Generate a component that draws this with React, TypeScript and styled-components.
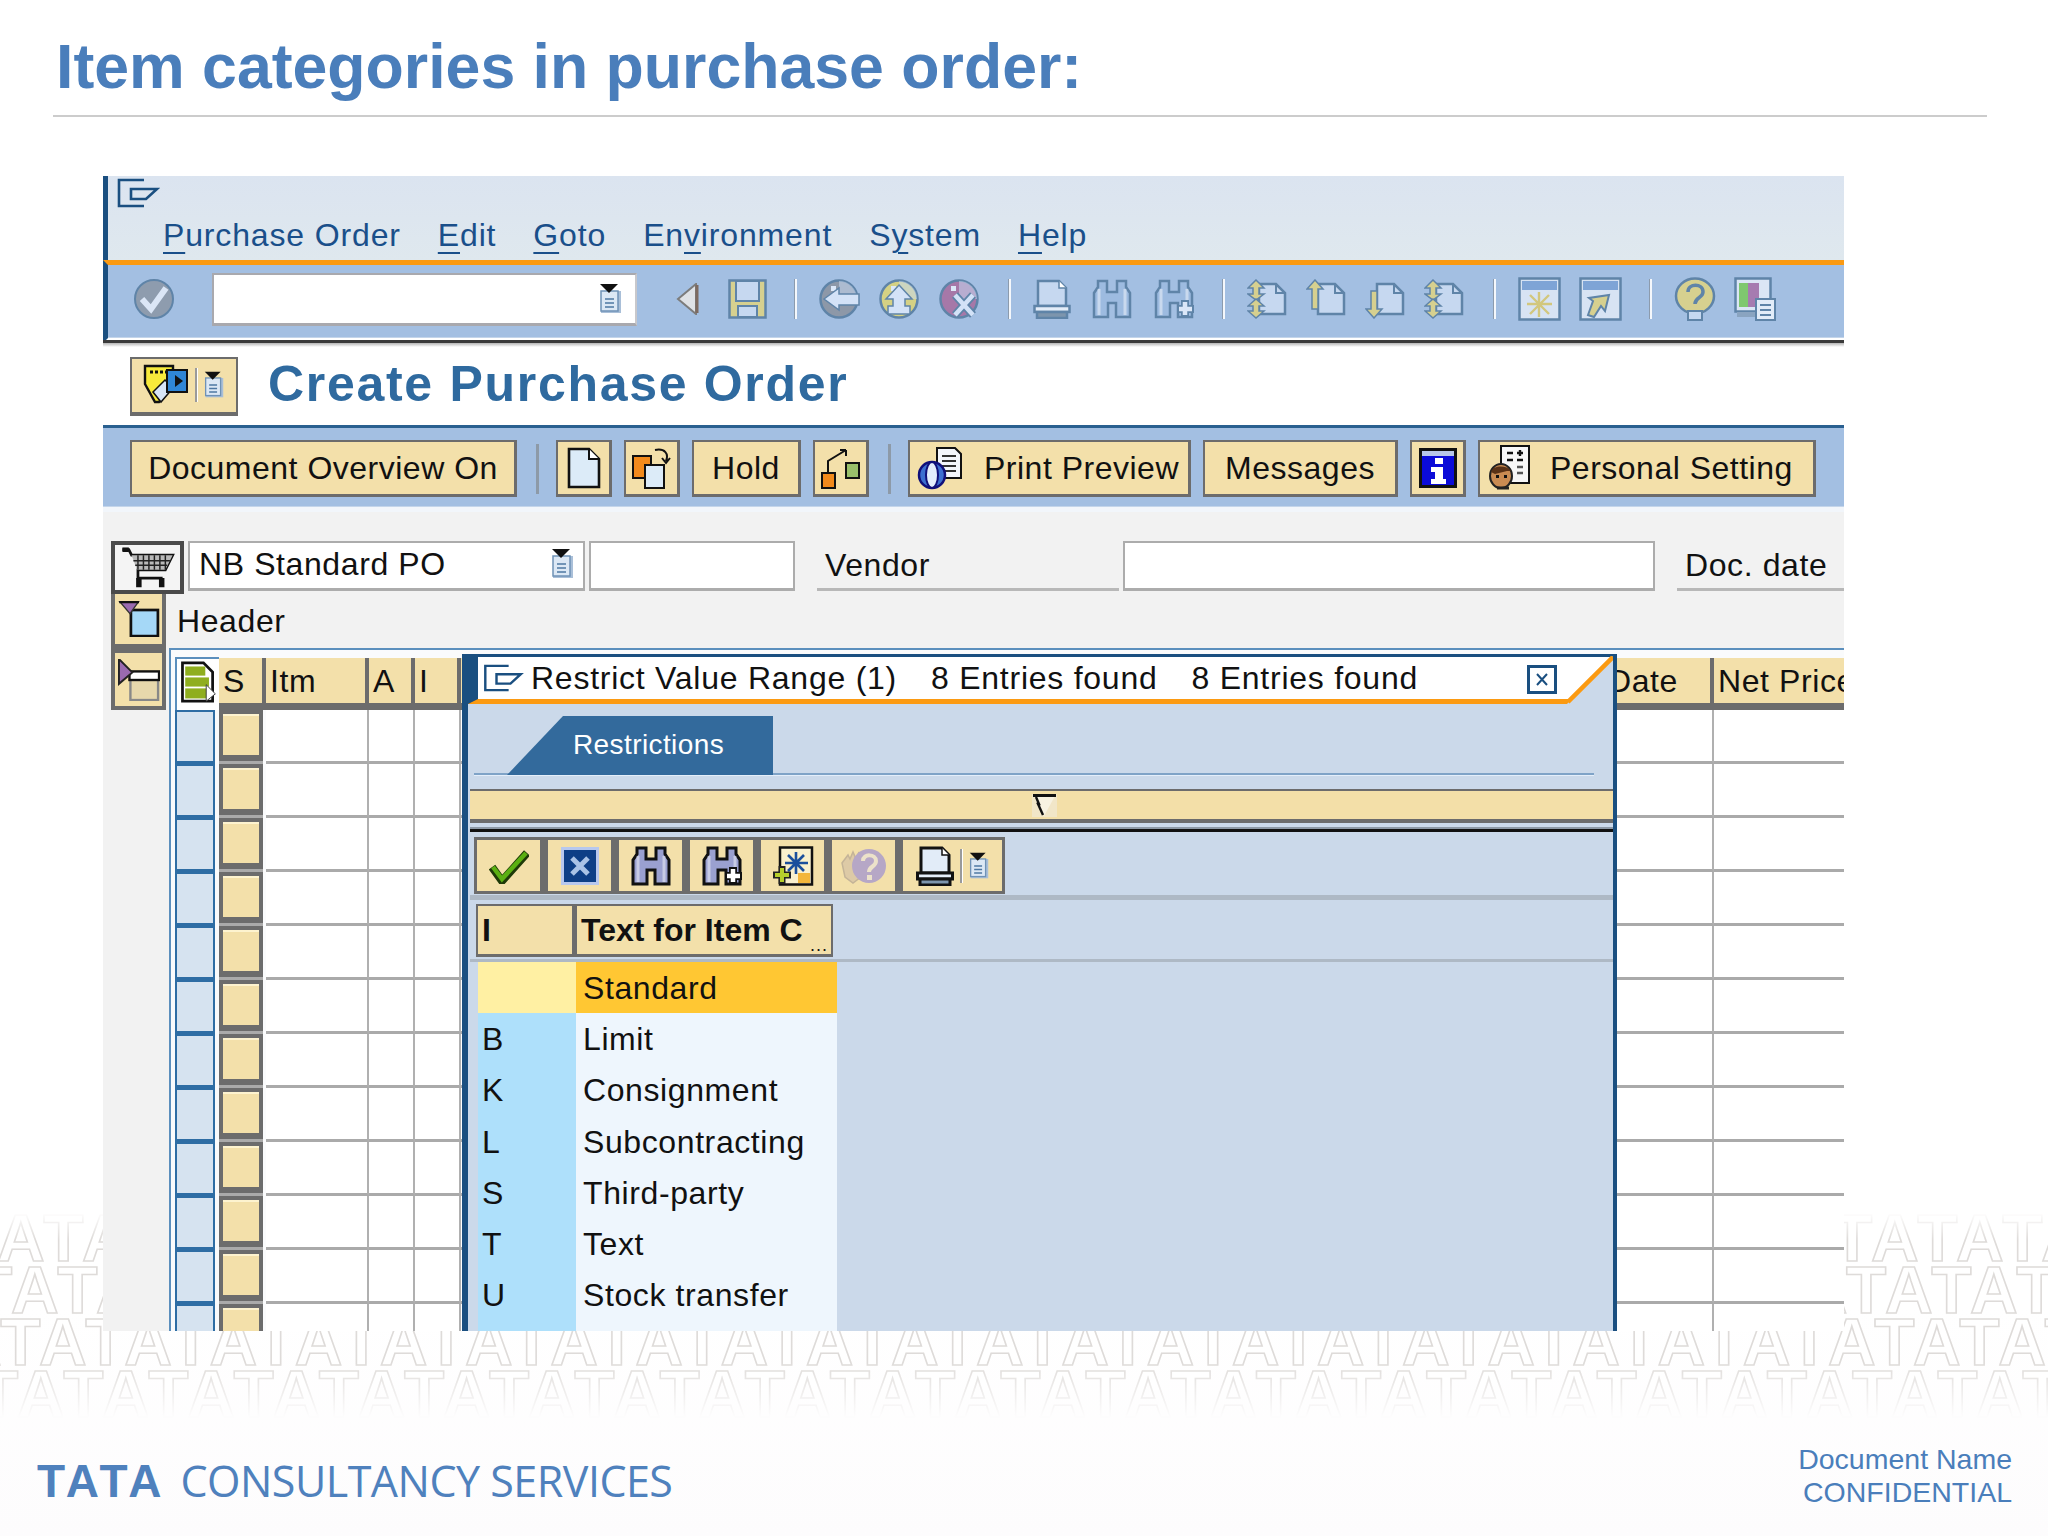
import React from 'react';
import styled, { createGlobalStyle } from 'styled-components';

const NAVY = '#1a4f80';
const BEIGE = '#f3e0aa';
const EDGE = '#6c6c6c';
const BAR = '#a3bfe2';
const POPUP = '#cbd9ea';
const OFF_LINE = '#5f84a8';
const OFF_FILL = '#c6d8f0';
const OFF_YELLOW = '#d6d08f';

const GlobalStyle = createGlobalStyle`
  html, body {
    margin: 0;
    padding: 0;
    background: #fff;
  }
  * {
    box-sizing: border-box;
  }
`;

/* ---------- icons ---------- */

const WindowGlyph = ({ w = 43, h = 30 }: { w?: number; h?: number }) => (
  <svg width={w} height={h} viewBox="0 0 43 30" fill="none" stroke={NAVY} strokeWidth="2.6">
    <path d="M27 2H2V28H27" />
    <path d="M14 11H40L29 21H14Z" />
  </svg>
);

const Clipboard = ({ w = 25, h = 30 }: { w?: number; h?: number }) => (
  <svg width={w} height={h} viewBox="0 0 25 30">
    <rect x="3" y="7" width="20" height="22" fill="#a9bfd8" />
    <rect x="3" y="7" width="17" height="20" fill="#dce8f5" stroke="#6f92b6" strokeWidth="1.5" />
    <polygon points="2,0 20,0 11,9" fill="#111" />
    <path d="M7 15H16M7 19H16M7 23H16" stroke="#4e78a3" strokeWidth="1.6" />
  </svg>
);

const CheckOff = () => (
  <svg width="42" height="40" viewBox="0 0 42 40">
    <circle cx="21" cy="20" r="19" fill="#8e9cae" stroke={OFF_LINE} strokeWidth="2" />
    <path d="M9 20L18 30L33 9" fill="none" stroke="#dbe6f6" strokeWidth="6" />
  </svg>
);

const BackTriangle = () => (
  <svg width="23" height="32" viewBox="0 0 23 32">
    <polygon points="20,1 20,31 2,16" fill="#dfe2e6" stroke="#7c7c7c" strokeWidth="2" />
    <path d="M21 2V30" stroke="#7d6a60" strokeWidth="3" />
  </svg>
);

const SaveOff = () => (
  <svg width="39" height="40" viewBox="0 0 39 40">
    <rect x="1.5" y="1.5" width="36" height="37" fill={OFF_YELLOW} stroke={OFF_LINE} strokeWidth="2.5" />
    <rect x="8" y="2" width="23" height="20" fill={OFF_FILL} stroke={OFF_LINE} strokeWidth="2" />
    <rect x="10" y="27" width="19" height="11" fill={OFF_FILL} stroke={OFF_LINE} strokeWidth="2" />
  </svg>
);

const RoundOff = ({ tint, children }: { tint: string; children: React.ReactNode }) => (
  <svg width="42" height="40" viewBox="0 0 42 40">
    <circle cx="20" cy="20" r="18.5" fill={tint} stroke={OFF_LINE} strokeWidth="2.5" />
    <path d="M20 2A18 18 0 0 1 38 20L20 20Z" fill={OFF_FILL} opacity="0.55" />
    <rect x="12" y="7" width="5" height="5" fill="#dce8f8" />
    {children}
  </svg>
);

const BackOff = () => (
  <RoundOff tint="#8d98a8">
    <polygon points="5,20 20,9 20,15 40,15 40,26 20,26 20,31" fill="#d3e2f7" stroke={OFF_LINE} strokeWidth="1.5" />
  </RoundOff>
);

const UpOff = () => (
  <RoundOff tint="#d5d184">
    <polygon points="20,6 33,20 26,20 26,27 31,27 31,35 9,35 9,27 14,27 14,20 7,20" fill="#d3e2f7" stroke={OFF_LINE} strokeWidth="1.5" />
  </RoundOff>
);

const CancelOff = () => (
  <RoundOff tint="#a678a8">
    <path d="M16 16L34 36M34 16L16 36" stroke={OFF_LINE} strokeWidth="8" />
    <path d="M16 16L34 36M34 16L16 36" stroke="#d3e2f7" strokeWidth="4.5" />
  </RoundOff>
);

const Printer = ({ line, fill, weight = 2.5 }: { line: string; fill: string; weight?: number }) => (
  <svg width="38" height="40" viewBox="0 0 38 40">
    <path d="M5 2H26L33 9V27H5Z" fill={fill} stroke={line} strokeWidth={weight} />
    <path d="M26 2V9H33" fill="#fff" stroke={line} strokeWidth="1.5" />
    <rect x="1.5" y="27" width="35" height="6" fill="#e4edf8" stroke={line} strokeWidth={weight} />
    <rect x="4" y="33" width="30" height="6" fill="#7d95ad" stroke={line} strokeWidth={weight} />
  </svg>
);

const Binoculars = ({ line, fill, weight = 2.5, plus }: { line: string; fill: string; weight?: number; plus?: boolean }) => (
  <svg width="42" height="40" viewBox="0 0 42 40">
    <polygon
      points="7,2 16,2 16,13 26,13 26,2 35,2 35,8 39,14 39,38 25,38 25,24 17,24 17,38 3,38 3,14 7,8"
      fill={fill}
      stroke={line}
      strokeWidth={weight}
    />
    <path d="M8 10V36M34 10V36" stroke="#ffffff" strokeOpacity="0.45" strokeWidth="3" />
    {plus && <path d="M32 21V38M24 30H41" stroke={line} strokeWidth="8" />}
    {plus && <path d="M32 23V36M26 30H39" stroke={line === '#111' ? '#fff' : '#dbe7f8'} strokeWidth="4.5" />}
  </svg>
);

const PageArrows = ({ up, down, twin }: { up?: boolean; down?: boolean; twin?: boolean }) => (
  <svg width="42" height="40" viewBox="0 0 42 40">
    <path d="M12 5H29L38 14V35H12Z" fill={OFF_FILL} stroke={OFF_LINE} strokeWidth="2.5" />
    <path d="M29 5V14H38" fill="none" stroke={OFF_LINE} strokeWidth="2" />
    {up && <polygon points="9,1 17,10 12,10 12,30 6,30 6,10 1,10" fill={OFF_YELLOW} stroke={OFF_LINE} strokeWidth="1.5" />}
    {down && <polygon points="9,39 17,30 12,30 12,12 6,12 6,30 1,30" fill={OFF_YELLOW} stroke={OFF_LINE} strokeWidth="1.5" />}
    {twin && (
      <>
        <polygon points="9,1 17,9 12,9 12,15 17,15 9,21 1,15 6,15 6,9 1,9" fill={OFF_YELLOW} stroke={OFF_LINE} strokeWidth="1.5" />
        <polygon points="9,20 17,27 12,27 12,32 17,32 9,39 1,32 6,32 6,27 1,27" fill={OFF_YELLOW} stroke={OFF_LINE} strokeWidth="1.5" />
      </>
    )}
  </svg>
);

const WindowOff = ({ arrow }: { arrow?: boolean }) => (
  <svg width="43" height="44" viewBox="0 0 43 44">
    <rect x="1.5" y="1.5" width="40" height="41" fill="#d7e3f3" stroke={OFF_LINE} strokeWidth="2.5" />
    <rect x="4" y="4" width="35" height="9" fill="#7ea4d6" />
    {arrow ? (
      <polygon points="9,38 14,24 10,21 30,18 26,34 22,29 15,40" fill={OFF_YELLOW} stroke={OFF_LINE} strokeWidth="2" />
    ) : (
      <path d="M21 15V40M9 27H34M12 18L31 37M31 18L12 37" stroke="#d2c77d" strokeWidth="2.4" />
    )}
  </svg>
);

const HelpOff = () => (
  <svg width="42" height="44" viewBox="0 0 42 44">
    <ellipse cx="21" cy="19" rx="19" ry="17.5" fill={OFF_YELLOW} stroke={OFF_LINE} strokeWidth="2.5" />
    <path d="M14 15C14 6 29 6 29 15C29 21 21 20 21 27" fill="none" stroke={OFF_LINE} strokeWidth="3.5" />
    <rect x="14" y="34" width="14" height="9" fill={OFF_FILL} stroke={OFF_LINE} strokeWidth="2" />
  </svg>
);

const LayoutOff = () => (
  <svg width="42" height="44" viewBox="0 0 42 44">
    <rect x="1.5" y="1.5" width="35" height="33" fill="#dbe6f5" stroke={OFF_LINE} strokeWidth="2.5" />
    <rect x="5" y="6" width="9" height="24" fill="#7fc86f" />
    <rect x="14" y="6" width="11" height="24" fill="#a67bb0" />
    <rect x="3" y="35" width="26" height="5" fill="#8aa4c0" />
    <rect x="22" y="22" width="19" height="21" fill="#e2ecf8" stroke={OFF_LINE} strokeWidth="2" />
    <path d="M26 28H37M26 33H37M26 38H37" stroke={OFF_LINE} strokeWidth="2" />
  </svg>
);

const NewPage = () => (
  <svg width="34" height="42" viewBox="0 0 34 42">
    <path d="M2 2H22L32 12V40H2Z" fill="#dcebf8" stroke="#111" strokeWidth="2.6" />
    <path d="M22 2V12H32" fill="#fff" stroke="#111" strokeWidth="2" />
  </svg>
);

const CopyPage = () => (
  <svg width="42" height="44" viewBox="0 0 42 44">
    <rect x="2" y="10" width="18" height="22" fill="#f28a1c" stroke="#111" strokeWidth="2" />
    <rect x="14" y="19" width="19" height="23" fill="#dcebf8" stroke="#111" strokeWidth="2" />
    <path d="M24 4C34 2 38 8 35 15M31 12L35 17L39 12" fill="none" stroke="#111" strokeWidth="2" />
  </svg>
);

const TreeNodes = () => (
  <svg width="42" height="42" viewBox="0 0 42 42">
    <rect x="2" y="26" width="13" height="15" fill="#f28a1c" stroke="#111" strokeWidth="2" />
    <rect x="26" y="16" width="13" height="15" fill="#9ac06a" stroke="#111" strokeWidth="2" />
    <path d="M8 25V14L26 3M26 3H20M26 3V9" fill="none" stroke="#111" strokeWidth="2" />
  </svg>
);

const Preview = () => (
  <svg width="48" height="44" viewBox="0 0 48 44">
    <path d="M20 2H38L44 8V32H20Z" fill="#f3f6fb" stroke="#111" strokeWidth="2" />
    <path d="M25 10H39M25 15H39M25 20H39M25 25H39" stroke="#333" strokeWidth="2" />
    <circle cx="15" cy="29" r="13" fill="#3c6fd0" stroke="#10107a" strokeWidth="2.5" />
    <ellipse cx="15" cy="29" rx="6" ry="13" fill="#e4eefc" stroke="#10107a" strokeWidth="2" />
  </svg>
);

const InfoTile = () => (
  <svg width="40" height="42" viewBox="0 0 40 42">
    <rect x="1" y="1" width="38" height="40" fill="#111" />
    <rect x="4" y="4" width="32" height="34" fill="#0b0bd8" />
    <rect x="4" y="4" width="32" height="5" fill="#b8c6e8" />
    <rect x="17" y="11" width="8" height="6" fill="#fff" />
    <path d="M13 20H25V32H28V37H13V32H17V25H13Z" fill="#fff" />
  </svg>
);

const Calculator = () => (
  <svg width="44" height="46" viewBox="0 0 44 46">
    <rect x="14" y="1" width="28" height="37" fill="#f7f7f7" stroke="#111" strokeWidth="2" />
    <path d="M20 8H26M30 8H36M33 5V11M20 15H26M30 15H36" stroke="#111" strokeWidth="2.4" />
    <path d="M30 22H36M30 28H36" stroke="#555" strokeWidth="2.4" />
    <ellipse cx="14" cy="31" rx="11" ry="12" fill="#c98b52" stroke="#222" strokeWidth="2" />
    <path d="M4 27C6 20 20 20 24 26L20 26L8 29Z" fill="#5a3216" />
    <rect x="9" y="30" width="3" height="3" fill="#111" />
    <rect x="17" y="30" width="3" height="3" fill="#111" />
    <path d="M10 43H22" stroke="#222" strokeWidth="3" />
  </svg>
);

const TagPair = () => (
  <svg width="46" height="42" viewBox="0 0 46 42">
    <polygon points="2,2 30,2 30,20 16,38 12,38 2,20" fill="#f7ea3b" stroke="#111" strokeWidth="2.4" />
    <path d="M7 8H25" stroke="#111" strokeWidth="3" strokeDasharray="3 2" />
    <polygon points="10,28 22,16 30,24 18,38" fill="#d8e6f6" stroke="#111" strokeWidth="1.5" />
    <rect x="24" y="6" width="20" height="22" fill="#2f86d6" stroke="#111" strokeWidth="2" />
    <polygon points="32,11 40,17 32,23" fill="#111" />
  </svg>
);

const Cart = () => (
  <svg width="58" height="42" viewBox="0 0 58 46">
    <path d="M1 3H8L11 9H56L48 25H18V34H45" fill="none" stroke="#111" strokeWidth="3" />
    <path d="M11 9H56L48 25H17Z" fill="#b9b9b9" />
    <path d="M18 9V25M24 9V25M30 9V25M36 9V25M42 9V25M48 9V25M13 15H53M15 20H50" stroke="#222" strokeWidth="1.6" />
    <path d="M1 3H8" stroke="#111" strokeWidth="5" />
    <path d="M19 34V44M44 34V44" stroke="#111" strokeWidth="6" />
  </svg>
);

const HeaderTile = () => (
  <svg width="42" height="36" viewBox="0 0 44 40">
    <rect x="13" y="10" width="30" height="29" fill="#a5d8f7" stroke="#111" strokeWidth="3" />
    <polygon points="0,0 22,0 12,14" fill="#9a6ab0" stroke="#333" strokeWidth="1.5" />
    <path d="M0 1H22" stroke="#111" strokeWidth="3" />
  </svg>
);

const ItemTile = () => (
  <svg width="42" height="42" viewBox="0 0 44 44">
    <rect x="13" y="21" width="29" height="22" fill="#e7d8ac" stroke="#888" strokeWidth="2.5" />
    <rect x="12" y="13" width="31" height="9" fill="#fff" stroke="#111" strokeWidth="2.5" />
    <polygon points="1,0 1,26 15,14" fill="#9a6ab0" stroke="#222" strokeWidth="2" />
  </svg>
);

const ColumnsTile = () => (
  <svg width="38" height="42" viewBox="0 0 38 46">
    <path d="M2 2H25L35 12V44H2Z" fill="#fff" stroke="#111" strokeWidth="3" />
    <rect x="5" y="6" width="22" height="10" fill="#8fae1e" />
    <rect x="5" y="18" width="26" height="10" fill="#8fae1e" />
    <rect x="5" y="30" width="26" height="11" fill="#8fae1e" />
    <polygon points="28,26 38,36 28,44" fill="#fff" stroke="#333" strokeWidth="1" />
  </svg>
);

const Funnel = () => (
  <svg width="25" height="23" viewBox="0 0 25 23">
    <rect width="25" height="23" fill="#f1e6c8" />
    <polygon points="2,2 23,2 12,22" fill="#f7f2e2" />
    <path d="M1 1.5H24" stroke="#111" strokeWidth="3" />
    <path d="M4 3L7 10H6L11 21" fill="none" stroke="#111" strokeWidth="2.4" />
  </svg>
);

const CloseTile = () => (
  <svg width="30" height="29" viewBox="0 0 30 29">
    <rect x="1.5" y="1.5" width="27" height="26" fill="#fff" stroke={NAVY} strokeWidth="3" />
    <path d="M10 9L20 20M20 9L10 20" stroke={NAVY} strokeWidth="2" />
  </svg>
);

const GreenCheck = () => (
  <svg width="40" height="36" viewBox="0 0 40 36">
    <path d="M3 19L13 33L38 5" fill="none" stroke="#1e3a08" strokeWidth="8" />
    <path d="M4 19L13 31L37 5" fill="none" stroke="#5bb012" strokeWidth="4.5" />
  </svg>
);

const BlueCross = () => (
  <svg width="38" height="38" viewBox="0 0 38 38">
    <rect x="0" y="0" width="38" height="38" fill="#b7c8ee" />
    <rect x="3" y="3" width="32" height="32" fill="#0d3f86" />
    <path d="M11 11L27 27M27 11L11 27" stroke="#a9c3e6" strokeWidth="5" />
  </svg>
);

const GenerateTile = () => (
  <svg width="42" height="40" viewBox="0 0 42 40">
    <rect x="8" y="1.5" width="32" height="37" fill="#f9f0cd" stroke="#111" strokeWidth="2.5" />
    <path d="M24 6V28M13 17H36M16 9L32 25M32 9L16 25" stroke="#1b4f9c" strokeWidth="2.6" />
    <rect x="26" y="27" width="12" height="10" fill="#f3b63a" />
    <path d="M10 20V38M1 29H19" stroke="#222" strokeWidth="7" />
    <path d="M10 22V36M3 29H17" stroke="#b6cf2c" strokeWidth="4" />
  </svg>
);

const HelpFaded = () => (
  <svg width="46" height="38" viewBox="0 0 46 38">
    <path d="M1 16L7 8L9 12L12 5L15 12L18 5L20 30L12 36L4 30Z" fill="#ddcaa6" stroke="#c4b498" strokeWidth="1.5" />
    <circle cx="28" cy="19" r="17" fill="#b6a7c6" />
    <path d="M22 14C22 6 35 7 35 14C35 20 28 19 28 25" fill="none" stroke="#ece2ca" strokeWidth="4" />
    <rect x="26" y="28" width="5" height="5" fill="#ece2ca" />
  </svg>
);

const TinyDivider = styled.span`
  width: 2px;
  height: 34px;
  background: #9a9a9a;
  box-shadow: 1px 0 0 #fff;
`;

/* ---------- page ---------- */

const Page = styled.div`
  position: relative;
  width: 2048px;
  height: 1536px;
  overflow: hidden;
  display: flex;
  flex-direction: column;
  background: linear-gradient(#fff 85%, #fdfcfd);
  font-family: 'Liberation Sans', Arial, sans-serif;
`;

const Watermark = styled.div`
  position: absolute;
  left: 0;
  top: 1212px;
  width: 2048px;
  height: 206px;
  overflow: hidden;
  display: flex;
  flex-direction: column;
  mask-image: linear-gradient(transparent, #000 28px, #000 150px, transparent);
`;

const WatermarkRow = styled.div<{ $shift: number }>`
  margin-left: ${(p) => p.$shift}px;
  height: 52px;
  line-height: 52px;
  white-space: nowrap;
  font-size: 66px;
  font-weight: 700;
  letter-spacing: 3.5px;
  color: #fff;
  -webkit-text-stroke: 1.6px #dedbd9;
`;

const Heading = styled.h1`
  margin: 0 0 0 56px;
  padding-top: 30px;
  height: 115px;
  font-size: 62.6px;
  line-height: 72px;
  font-weight: 700;
  color: #4a7ebb;
`;

const Rule = styled.div`
  margin-left: 53px;
  width: 1934px;
  height: 2px;
  background: #cccccc;
`;

const Screen = styled.div`
  position: relative;
  margin: 59px 0 0 103px;
  width: 1741px;
  height: 1155px;
  flex: none;
  overflow: hidden;
  display: flex;
  flex-direction: column;
  background: #f2f2f2;
  font-size: 32px;
  letter-spacing: 0.6px;
  color: #111;
  line-height: 1;
`;

const MenuBar = styled.div`
  height: 84px;
  flex: none;
  border-left: 5px solid ${NAVY};
  background: linear-gradient(#dbe4f0, #dfe8ee);
  display: flex;
  flex-direction: column;
  padding: 2px 0 0 9px;
`;

const MenuRow = styled.div`
  display: flex;
  gap: 37px;
  margin: 6px 0 0 46px;
  font-size: 32px;
  letter-spacing: 0.85px;
  color: #1a4f8a;
`;

const Accel = styled.span`
  text-decoration: underline;
  text-decoration-thickness: 2px;
  text-underline-offset: 6px;
`;

const SystemBar = styled.div`
  height: 83px;
  flex: none;
  display: flex;
  align-items: center;
  padding: 0 0 5px 25px;
  background: ${BAR};
  border-top: 5px solid #fb9a12;
  border-left: 5px solid ${NAVY};
  border-bottom: 5px solid #fff;
  box-shadow: inset 0 -1px 0 #c4d5ea;
  position: relative;
  &::after {
    content: '';
    position: absolute;
    left: -5px;
    right: 0;
    bottom: -5px;
    height: 3px;
    background: #3a3a3a;
  }
`;

const SystemBarShade = styled.div`
  height: 4px;
  flex: none;
  background: linear-gradient(#b5b5b5, #fff);
`;

const CommandField = styled.div`
  width: 425px;
  height: 53px;
  margin: 0 39px 0 37px;
  padding-right: 12px;
  display: flex;
  align-items: center;
  justify-content: flex-end;
  background: #fff;
  border: 2px solid #a9a9ae;
  border-bottom-width: 3px;
  border-right-color: #c8c8cc;
`;

const ToolGroup = styled.div<{ $gap: number }>`
  display: flex;
  align-items: center;
  gap: ${(p) => p.$gap}px;
`;

const BarDivider = styled.span`
  width: 3px;
  height: 40px;
  margin: 0 22px 0 27px;
  background: linear-gradient(90deg, #8c9bad 0 1px, #f4f7fb 1px);
`;

const TitleRow = styled.div`
  height: 78px;
  flex: none;
  display: flex;
  align-items: center;
  gap: 30px;
  padding-left: 27px;
  background: #fff;
`;

const VariantButton = styled.div`
  width: 108px;
  height: 59px;
  display: flex;
  align-items: center;
  justify-content: center;
  gap: 6px;
  background: ${BEIGE};
  border: 2px solid ${EDGE};
  border-bottom-width: 4px;
`;

const ScreenTitle = styled.h2`
  margin: 0 0 4px;
  font-size: 50px;
  font-weight: 700;
  letter-spacing: 1.7px;
  color: #2f6a9f;
`;

const AppBar = styled.div`
  height: 87px;
  flex: none;
  display: flex;
  align-items: center;
  gap: 12px;
  padding: 2px 0 0 27px;
  background: ${BAR};
  border-top: 3px solid #2a6090;
  border-bottom: 5px solid #f2f6fb;
  box-shadow: inset 0 -1px 0 #c4d5ea;
`;

const AppButton = styled.div<{ $w: number; $start?: boolean }>`
  width: ${(p) => p.$w}px;
  height: 57px;
  flex: none;
  display: flex;
  align-items: center;
  justify-content: ${(p) => (p.$start ? 'flex-start' : 'center')};
  padding-left: ${(p) => (p.$start ? 7 : 0)}px;
  gap: 19px;
  background: ${BEIGE};
  border: 2px solid ${EDGE};
  border-right-width: 3px;
  border-bottom-width: 3px;
  letter-spacing: 0.5px;
  white-space: nowrap;
`;

const AppDivider = styled.span`
  width: 3px;
  height: 50px;
  margin: 0 5px 0 7px;
  background: #8d9aa8;
`;

const Form = styled.div`
  flex: 1;
  min-height: 0;
  padding: 29px 0 0 8px;
  display: flex;
  flex-direction: column;
`;

const FieldRow = styled.div`
  display: flex;
  align-items: flex-start;
  height: 53px;
`;

const CartButton = styled.div`
  width: 73px;
  height: 53px;
  flex: none;
  display: flex;
  align-items: center;
  justify-content: center;
  background: #f4f4f4;
  border: 4px solid #4a4a4a;
`;

const Field = styled.div<{ $w: number; $after?: number }>`
  width: ${(p) => p.$w}px;
  height: 50px;
  flex: none;
  margin-left: 4px;
  margin-right: ${(p) => p.$after ?? 0}px;
  padding: 0 8px 4px 9px;
  display: flex;
  align-items: center;
  justify-content: space-between;
  background: #fff;
  border: 2px solid #acacac;
  border-bottom-width: 3px;
`;

const FieldLabel = styled.div<{ $w: number }>`
  width: ${(p) => p.$w}px;
  height: 50px;
  flex: none;
  padding: 8px 0 0 8px;
  border-bottom: 3px solid #b8b8b8;
  white-space: nowrap;
`;

const HeaderRow = styled.div`
  height: 54px;
  flex: none;
  display: flex;
  align-items: center;
  gap: 11px;
`;

const SideButton = styled.div<{ $h: number; $capped?: boolean }>`
  width: 55px;
  height: ${(p) => p.$h}px;
  flex: none;
  display: flex;
  align-items: center;
  justify-content: center;
  background: ${BEIGE};
  border: 4px solid ${EDGE};
  border-top-width: ${(p) => (p.$capped ? 5 : 0)}px;
`;

const ItemArea = styled.div`
  flex: 1;
  min-height: 0;
  display: flex;
  align-items: flex-start;
  gap: 3px;
`;

const ItemTable = styled.div`
  flex: 1;
  display: flex;
  flex-direction: column;
  padding: 7px 0 0 4px;
  border-top: 2px solid #5b8fbd;
  border-left: 2px solid #5b8fbd;
  background: #fafbfc;
`;

const columns = '44px 47px 103px 46px 46px 1fr 102px 130px';

const TableHead = styled.div`
  display: grid;
  grid-template-columns: ${columns};
  height: 53px;
  flex: none;
  background: linear-gradient(#fafbfc 1px, ${EDGE} 1px);
`;

const SelectAll = styled.div`
  display: flex;
  align-items: center;
  justify-content: center;
  background: #fff;
  border: 2px solid #5b8fbd;
  border-bottom-width: 0;
  border-right-width: 0;
  padding-bottom: 6px;
`;

const HeadCell = styled.div<{ $end?: boolean }>`
  height: 45px;
  margin: 1px 4px 0 0;
  display: flex;
  align-items: center;
  justify-content: ${(p) => (p.$end ? 'flex-end' : 'flex-start')};
  padding: 0 ${(p) => (p.$end ? 32 : 4)}px 0 4px;
  background: ${BEIGE};
  white-space: nowrap;
  &:last-child {
    margin-right: 0;
  }
`;

const TableRow = styled.div`
  display: grid;
  grid-template-columns: ${columns};
  height: 54px;
  flex: none;
`;

const RowMark = styled.div`
  margin-right: 4px;
  background: #d6e3f0;
  border: 2px solid #2e6da4;
  border-bottom-width: 3px;
`;

const RowStatus = styled.div`
  margin-right: 3px;
  padding: 4px 4px 6px;
  background: ${EDGE};
  border-bottom: 3px solid #aaa;
  display: flex;
  &::after {
    content: '';
    flex: 1;
    background: ${BEIGE};
    border-top: 2px solid #fdf3cf;
  }
`;

const RowCell = styled.div`
  background: #fff;
  border-right: 2px solid #b0b0b0;
  border-bottom: 3px solid #aaa;
  &:last-child {
    border-right: 0;
  }
`;

const Popup = styled.div`
  position: absolute;
  left: 359px;
  top: 478px;
  width: 1155px;
  bottom: 0;
  display: flex;
  flex-direction: column;
  background: ${POPUP};
  border-top: 3px solid ${NAVY};
  border-left: 6px solid ${NAVY};
  border-right: 4px solid ${NAVY};
`;

const PopupTitle = styled.div`
  position: relative;
  height: 47px;
  flex: none;
  display: flex;
  align-items: center;
  background: #fff;
  border-left: 10px solid ${NAVY};
  border-bottom: 5px solid #fb9a12;
  padding-left: 5px;
  white-space: pre;
  letter-spacing: 0.75px;
`;

const TitleIcon = styled.span`
  display: flex;
  margin-right: 7px;
`;

const TitleCount = styled.span`
  margin-left: 34px;
`;

const CloseSpot = styled.span`
  position: absolute;
  right: 56px;
  top: 8px;
  display: flex;
`;

const Corner = styled.svg`
  position: absolute;
  right: 0;
  top: -1px;
`;

const TabStrip = styled.div`
  height: 71px;
  flex: none;
  margin: 0 19px 0 6px;
  padding: 12px 0 0 33px;
  border-bottom: 2px solid #7fa3c7;
  box-shadow: 0 1px 0 #e4eefa;
`;

const Tab = styled.div`
  width: 266px;
  height: 59px;
  padding: 15px 0 0 66px;
  background: #336a9c;
  clip-path: polygon(56px 0, 100% 0, 100% 100%, 0 100%);
  color: #fff;
  font-size: 28px;
  letter-spacing: 0.4px;
`;

const SelectionBar = styled.div`
  height: 34px;
  flex: none;
  margin: 14px 0 0 2px;
  display: flex;
  align-items: center;
  justify-content: center;
  padding-left: 6px;
  background: #f3dfa8;
  border-top: 2px solid ${EDGE};
  border-bottom: 4px solid ${EDGE};
`;

const ResultPane = styled.div`
  flex: 1;
  min-height: 0;
  margin: 6px 0 0 2px;
  display: flex;
  flex-direction: column;
  border-top: 3px solid #111;
  box-shadow: 0 -2px 0 #8d99a6;
`;

const ResultTools = styled.div`
  display: flex;
  gap: 8px;
  align-self: flex-start;
  margin: 5px 0 0 4px;
  padding: 3px;
  background: ${EDGE};
`;

const ToolTile = styled.div<{ $w?: number }>`
  width: ${(p) => p.$w ?? 63}px;
  height: 51px;
  display: flex;
  align-items: center;
  justify-content: center;
  gap: 6px;
  background: ${BEIGE};
`;

const PaneRule = styled.div`
  height: 5px;
  flex: none;
  margin-top: 1px;
  background: #aeb9c5;
`;

const ListHead = styled.div`
  height: 58px;
  flex: none;
  display: flex;
  align-items: flex-start;
  margin-top: 4px;
  padding-left: 6px;
  border-bottom: 3px solid #aeb9c5;
`;

const ListHeadGroup = styled.div`
  display: flex;
  gap: 5px;
  padding: 2px 2px 3px;
  background: ${EDGE};
  height: 53px;
`;

const ListHeadCell = styled.div<{ $w: number }>`
  width: ${(p) => p.$w}px;
  height: 48px;
  padding: 0 3px 0 4px;
  display: flex;
  align-items: center;
  justify-content: space-between;
  background: ${BEIGE};
  font-weight: 700;
  letter-spacing: 0;
  white-space: nowrap;
`;

const MoreDots = styled.span`
  align-self: flex-end;
  font-size: 18px;
  font-weight: 400;
  letter-spacing: 1px;
`;

const ListRow = styled.div`
  display: grid;
  grid-template-columns: 98px 261px;
  height: 51.3px;
  flex: none;
  margin-left: 8px;
`;

const KeyCell = styled.div<{ $on?: boolean }>`
  display: flex;
  align-items: center;
  padding-left: 4px;
  background: ${(p) => (p.$on ? '#fff0a3' : '#aee0fb')};
`;

const TextCell = styled.div<{ $on?: boolean }>`
  display: flex;
  align-items: center;
  padding-left: 7px;
  white-space: nowrap;
  background: ${(p) => (p.$on ? '#ffc733' : '#eef6fd')};
`;

const Footer = styled.div`
  margin-top: auto;
  height: 100px;
  flex: none;
  display: flex;
  align-items: flex-start;
  justify-content: space-between;
  padding: 0 36px 0 37px;
  color: #4f81bd;
`;

const Brand = styled.div`
  display: flex;
  align-items: baseline;
  gap: 15px;
  padding-top: 15px;
  white-space: nowrap;
`;

const BrandMark = styled.span`
  font-size: 46px;
  font-weight: 700;
  letter-spacing: 4px;
`;

const BrandName = styled.span`
  font-family: 'Open Sans', 'Liberation Sans', sans-serif;
  font-size: 43px;
  letter-spacing: -0.5px;
`;

const Notice = styled.div`
  padding-top: 7px;
  text-align: right;
  font-size: 28.5px;
  line-height: 33px;
  color: #4a7ebb;
`;

const menu: [string, string, string][] = [
  ['', 'P', 'urchase Order'],
  ['', 'E', 'dit'],
  ['', 'G', 'oto'],
  ['En', 'v', 'ironment'],
  ['S', 'y', 'stem'],
  ['', 'H', 'elp'],
];

const listRows = [
  ['B', 'Limit'],
  ['K', 'Consignment'],
  ['L', 'Subcontracting'],
  ['S', 'Third-party'],
  ['T', 'Text'],
  ['U', 'Stock transfer'],
];

export default function App() {
  return (
    <Page>
      <GlobalStyle />
      <Watermark aria-hidden="true">
        {[-42, -28, -85, -22].map((shift) => (
          <WatermarkRow key={shift} $shift={shift}>
            {'TATA'.repeat(13)}
          </WatermarkRow>
        ))}
      </Watermark>

      <Heading>Item categories in purchase order:</Heading>
      <Rule />

      <Screen>
        <MenuBar>
          <div>
            <WindowGlyph />
          </div>
          <MenuRow>
            {menu.map(([before, key, after]) => (
              <span key={key + after}>
                {before}
                <Accel>{key}</Accel>
                {after}
              </span>
            ))}
          </MenuRow>
        </MenuBar>

        <SystemBar>
          <CheckOff />
          <CommandField>
            <Clipboard />
          </CommandField>
          <ToolGroup $gap={29}>
            <BackTriangle />
            <SaveOff />
          </ToolGroup>
          <BarDivider />
          <ToolGroup $gap={18}>
            <BackOff />
            <UpOff />
            <CancelOff />
          </ToolGroup>
          <BarDivider />
          <ToolGroup $gap={20}>
            <Printer line={OFF_LINE} fill={OFF_FILL} />
            <Binoculars line={OFF_LINE} fill="#9dbbe0" />
            <Binoculars line={OFF_LINE} fill="#9dbbe0" plus />
          </ToolGroup>
          <BarDivider />
          <ToolGroup $gap={17}>
            <PageArrows twin />
            <PageArrows up />
            <PageArrows down />
            <PageArrows twin />
          </ToolGroup>
          <BarDivider />
          <ToolGroup $gap={18}>
            <WindowOff />
            <WindowOff arrow />
          </ToolGroup>
          <BarDivider />
          <ToolGroup $gap={18}>
            <HelpOff />
            <LayoutOff />
          </ToolGroup>
        </SystemBar>
        <SystemBarShade />

        <TitleRow>
          <VariantButton>
            <TagPair />
            <TinyDivider />
            <Clipboard w={22} h={28} />
          </VariantButton>
          <ScreenTitle>Create Purchase Order</ScreenTitle>
        </TitleRow>

        <AppBar>
          <AppButton $w={387}>Document Overview On</AppButton>
          <AppDivider />
          <AppButton $w={56}>
            <NewPage />
          </AppButton>
          <AppButton $w={56}>
            <CopyPage />
          </AppButton>
          <AppButton $w={109}>Hold</AppButton>
          <AppButton $w={56}>
            <TreeNodes />
          </AppButton>
          <AppDivider />
          <AppButton $w={283} $start>
            <Preview />
            Print Preview
          </AppButton>
          <AppButton $w={195}>Messages</AppButton>
          <AppButton $w={56}>
            <InfoTile />
          </AppButton>
          <AppButton $w={338} $start>
            <Calculator />
            Personal Setting
          </AppButton>
        </AppBar>

        <Form>
          <FieldRow>
            <CartButton>
              <Cart />
            </CartButton>
            <Field $w={397}>
              NB Standard PO
              <Clipboard />
            </Field>
            <Field $w={206} $after={22} />
            <FieldLabel $w={302}>Vendor</FieldLabel>
            <Field $w={532} $after={22} />
            <FieldLabel $w={167}>Doc. date</FieldLabel>
          </FieldRow>

          <HeaderRow>
            <SideButton $h={54}>
              <HeaderTile />
            </SideButton>
            Header
          </HeaderRow>

          <ItemArea>
            <SideButton $h={62} $capped>
              <ItemTile />
            </SideButton>
            <ItemTable>
              <TableHead>
                <SelectAll>
                  <ColumnsTile />
                </SelectAll>
                <HeadCell>S</HeadCell>
                <HeadCell>Itm</HeadCell>
                <HeadCell>A</HeadCell>
                <HeadCell>I</HeadCell>
                <HeadCell />
                <HeadCell $end>Date</HeadCell>
                <HeadCell>Net Price</HeadCell>
              </TableHead>
              {Array.from({ length: 12 }, (_, row) => (
                <TableRow key={row}>
                  <RowMark />
                  <RowStatus />
                  <RowCell />
                  <RowCell />
                  <RowCell />
                  <RowCell />
                  <RowCell />
                  <RowCell />
                </TableRow>
              ))}
            </ItemTable>
          </ItemArea>
        </Form>

        <Popup>
          <PopupTitle>
            <TitleIcon>
              <WindowGlyph w={41} h={28} />
            </TitleIcon>
            Restrict Value Range (1)
            <TitleCount>8 Entries found</TitleCount>
            <TitleCount>8 Entries found</TitleCount>
            <CloseSpot>
              <CloseTile />
            </CloseSpot>
            <Corner width="46" height="48" viewBox="0 0 46 48">
              <polygon points="46,0 46,48 0,48" fill={POPUP} />
              <path d="M46 1L1 46" stroke="#fb9a12" strokeWidth="4.5" />
            </Corner>
          </PopupTitle>

          <TabStrip>
            <Tab>Restrictions</Tab>
          </TabStrip>

          <SelectionBar>
            <Funnel />
          </SelectionBar>

          <ResultPane>
            <ResultTools>
              <ToolTile>
                <GreenCheck />
              </ToolTile>
              <ToolTile>
                <BlueCross />
              </ToolTile>
              <ToolTile>
                <Binoculars line="#111" fill="#9aa0d0" weight={3} />
              </ToolTile>
              <ToolTile>
                <Binoculars line="#111" fill="#9aa0d0" weight={3} plus />
              </ToolTile>
              <ToolTile>
                <GenerateTile />
              </ToolTile>
              <ToolTile>
                <HelpFaded />
              </ToolTile>
              <ToolTile $w={99}>
                <Printer line="#111" fill="#e2ecf8" weight={3} />
                <TinyDivider />
                <Clipboard w={22} h={28} />
              </ToolTile>
            </ResultTools>
            <PaneRule />
            <ListHead>
              <ListHeadGroup>
                <ListHeadCell $w={94}>I</ListHeadCell>
                <ListHeadCell $w={254}>
                  Text for Item C<MoreDots>...</MoreDots>
                </ListHeadCell>
              </ListHeadGroup>
            </ListHead>
            <ListRow>
              <KeyCell $on />
              <TextCell $on>Standard</TextCell>
            </ListRow>
            {listRows.map(([key, text]) => (
              <ListRow key={key}>
                <KeyCell>{key}</KeyCell>
                <TextCell>{text}</TextCell>
              </ListRow>
            ))}
            <ListRow>
              <KeyCell />
              <TextCell />
            </ListRow>
          </ResultPane>
        </Popup>
      </Screen>

      <Footer>
        <Brand>
          <BrandMark>TATA</BrandMark>
          <BrandName>CONSULTANCY SERVICES</BrandName>
        </Brand>
        <Notice>
          Document Name
          <br />
          CONFIDENTIAL
        </Notice>
      </Footer>
    </Page>
  );
}
